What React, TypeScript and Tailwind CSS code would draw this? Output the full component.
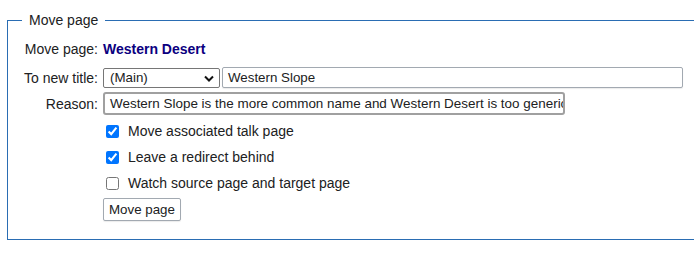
import React from "react";

export default function App() {
  return (
    <div className="w-[694px] h-[253px] bg-white overflow-hidden pt-[12px] text-[14px] leading-[16px] text-[#202122]" style={{ fontFamily: '"Liberation Sans", Arial, sans-serif' }}>
      <fieldset className="ml-[7px] w-[687px] border-l border-t border-b border-r-0 border-[#2a6db3] pl-[14px] pb-[18px]">
        <legend className="px-[7px]">Move page</legend>
        <div className="grid grid-cols-[76px_1fr] gap-x-[5px] items-center mt-[13px]">
          <div className="text-right">Move page:</div>
          <div className="font-bold text-[#0b0080]">Western Desert</div>

          <div className="text-right mt-[10px]">To new title:</div>
          <div className="flex items-center gap-[2px] mt-[10px]">
            <div className="relative w-[117px] h-[20px] border border-[#767676] rounded-[2px] flex items-center pl-[6px] bg-white text-[13.33px]">
              <span>(Main)</span>
              <svg className="absolute right-[5px] top-[6px]" width="10" height="7" viewBox="0 0 10 7">
                <path d="M1 1.5 L5 5.5 L9 1.5" fill="none" stroke="#111" strokeWidth="2" />
              </svg>
            </div>
            <div className="w-[461px] h-[21px] border border-[#a2a9b1] rounded-[2px] shadow-[0_1px_1px_rgba(0,0,0,0.08)] flex items-center pl-[5px] bg-white text-[13.33px]">
              Western Slope
            </div>
          </div>

          <div className="text-right mt-[4px]">Reason:</div>
          <div className="mt-[4px]">
            <div className="w-[462px] h-[23px] border-2 border-[#a0a0a0] rounded-[3px] flex items-center pl-[5px] overflow-hidden whitespace-nowrap bg-white text-[13.45px]">
              Western Slope is the more common name and Western Desert is too generic
            </div>
          </div>

          <div></div>
          <div className="flex flex-col gap-[10px] mt-[8px]">
            <label className="flex items-center h-[16px]">
              <input type="checkbox" defaultChecked className="w-[13px] h-[13px] ml-[3px] mr-[9px]" />
              Move associated talk page
            </label>
            <label className="flex items-center h-[16px]">
              <input type="checkbox" defaultChecked className="w-[13px] h-[13px] ml-[3px] mr-[9px]" />
              Leave a redirect behind
            </label>
            <label className="flex items-center h-[16px]">
              <input type="checkbox" className="w-[13px] h-[13px] ml-[3px] mr-[9px]" />
              Watch source page and target page
            </label>
          </div>

          <div></div>
          <div className="mt-[7px]">
            <button className="h-[23px] px-[5px] border border-[#a2a9b1] rounded-[2px] bg-white text-[#202122] text-[13.33px] shadow-[0_1px_1px_rgba(0,0,0,0.08)]">
              Move page
            </button>
          </div>
        </div>
      </fieldset>
    </div>
  );
}
